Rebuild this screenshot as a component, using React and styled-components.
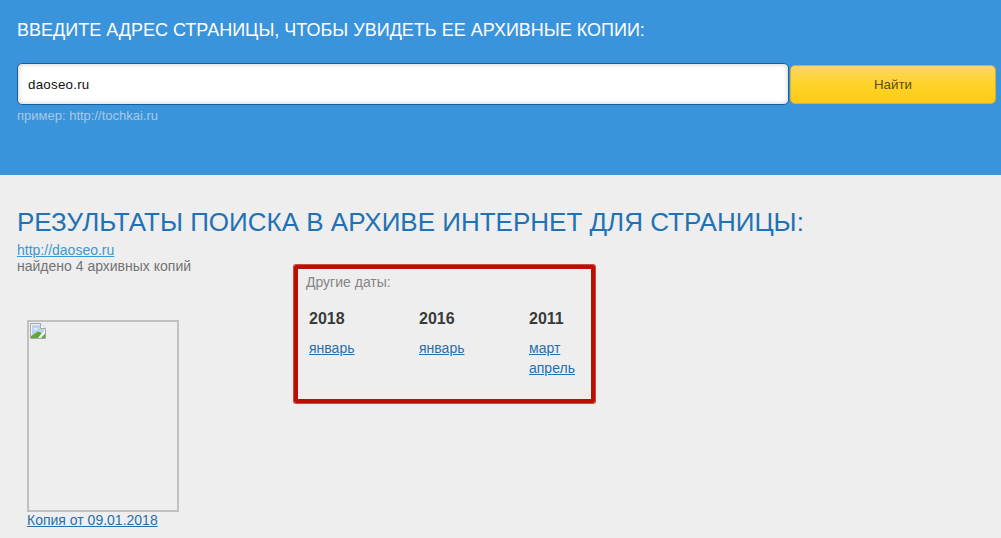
import React from "react";
import styled, { createGlobalStyle } from "styled-components";

const Global = createGlobalStyle`
  html, body { margin: 0; padding: 0; background: #eeeeee; }
  body { font-family: "Liberation Sans", Arial, sans-serif; overflow: hidden; }
`;
const Page = styled.div`
  width: 1001px;
  height: 538px;
  overflow: hidden;
  background: #eeeeee;
`;
const Header = styled.header`
  height: 175px;
  box-sizing: border-box;
  background: #3a94db;
  padding: 19px 5px 0 17px;
`;
const Prompt = styled.h2`
  margin: 0 0 22px;
  font-size: 18px;
  line-height: 22px;
  font-weight: 400;
  color: #ffffff;
`;
const SearchRow = styled.form`
  display: flex;
  align-items: flex-start;
  gap: 1px;
  margin: 0;
`;
const SearchInput = styled.input`
  width: 772px;
  height: 42px;
  box-sizing: border-box;
  padding: 0 10px;
  border: 1px solid #14609f;
  border-radius: 5px;
  background: #ffffff;
  box-shadow: inset 0 0 5px rgba(0, 0, 0, 0.22);
  font: 13.33px "Liberation Sans", Arial, sans-serif;
  letter-spacing: 0.25px;
  color: #111111;
  outline: none;
`;
const SearchButton = styled.button`
  width: 206px;
  height: 39px;
  margin-top: 2px;
  box-sizing: border-box;
  border: 1px solid #d2ae3c;
  border-radius: 5px;
  background: linear-gradient(#fbd768 0%, #fed32c 45%, #fecb14 100%);
  font: 13.33px "Liberation Sans", Arial, sans-serif;
  color: #5a4d1e;
  padding: 0;
`;
const Hint = styled.div`
  margin-top: 3px;
  font-size: 13px;
  line-height: 16px;
  color: #a9c9e4;
`;
const Results = styled.main`
  padding: 31px 0 0 17px;
`;
const ResultsTitle = styled.h1`
  margin: 0 0 4px;
  font-size: 26px;
  line-height: 32px;
  font-weight: 400;
  color: #2271b3;
`;
const Columns = styled.div`
  display: flex;
  align-items: flex-start;
`;
const Summary = styled.div`
  width: 277px;
  flex: none;
`;
const SiteLink = styled.a`
  display: block;
  width: max-content;
  font-size: 14px;
  line-height: 16px;
  color: #3c97cf;
  text-decoration: underline;
`;
const Found = styled.div`
  font-size: 14px;
  line-height: 16px;
  color: #737373;
`;
const Copy = styled.figure`
  margin: 46px 0 0 10px;
  width: 152px;
`;
const Thumb = styled.div`
  width: 152px;
  height: 192px;
  box-sizing: border-box;
  padding: 1px;
  border: 2px solid #c0c0c0;
`;
const CopyLink = styled.a`
  display: block;
  width: max-content;
  font-size: 14px;
  line-height: 16px;
  color: #2a6ea8;
  text-decoration: underline;
`;
const DatesBox = styled.aside`
  width: 301px;
  height: 138px;
  margin-top: 23px;
  box-sizing: border-box;
  padding: 4px 8px 0 8px;
  border: 4px solid #b90f00;
  border-radius: 2px;
  box-shadow: 0 0 0 1px #cf4a3e;
`;
const DatesLabel = styled.div`
  font-size: 14px;
  line-height: 18px;
  color: #858585;
`;
const Years = styled.div`
  display: grid;
  grid-template-columns: repeat(3, 110px);
  margin: 18px 0 0 3px;
`;
const Year = styled.div`
  font-size: 16px;
  font-weight: 700;
  line-height: 20px;
  color: #3a3a3a;
  margin-bottom: 9px;
`;
const Month = styled.a`
  display: block;
  width: max-content;
  font-size: 14px;
  line-height: 20px;
  color: #2a6ea8;
  text-decoration: underline;
`;

const BrokenImage = () => (
  <svg width="16" height="16" viewBox="0 0 16 16" style={{ display: "block" }}>
    <path d="M0.5 0.5H10.5L15.5 5.5V15.5H0.5Z" fill="#f2f4f8" stroke="#a6a6a6" />
    <path d="M10.5 0.5V5.5H15.5" fill="#ffffff" stroke="#a6a6a6" />
    <path d="M2 2H10V6H14V9L2 12Z" fill="#b9d3f2" />
    <path d="M3 6.5C5 4.5 7 5 8 6.5H3Z" fill="#ffffff" />
    <path d="M1 15V13L8 8.5L12 10L8 15Z" fill="#5fa83c" />
    <path d="M11 15L15 10.5V15Z" fill="#5fa83c" />
  </svg>
);

const years = [
  { year: 2018, months: ["январь"] },
  { year: 2016, months: ["январь"] },
  { year: 2011, months: ["март", "апрель"] },
];

export default function App() {
  return (
    <Page>
      <Global />
      <Header>
        <Prompt>ВВЕДИТЕ АДРЕС СТРАНИЦЫ, ЧТОБЫ УВИДЕТЬ ЕЕ АРХИВНЫЕ КОПИИ:</Prompt>
        <SearchRow onSubmit={(e) => e.preventDefault()}>
          <SearchInput defaultValue="daoseo.ru" />
          <SearchButton>Найти</SearchButton>
        </SearchRow>
        <Hint>пример: http://tochkai.ru</Hint>
      </Header>
      <Results>
        <ResultsTitle>РЕЗУЛЬТАТЫ ПОИСКА В АРХИВЕ ИНТЕРНЕТ ДЛЯ СТРАНИЦЫ:</ResultsTitle>
        <Columns>
          <Summary>
            <SiteLink href="#">http://daoseo.ru</SiteLink>
            <Found>найдено 4 архивных копий</Found>
            <Copy>
              <Thumb>
                <BrokenImage />
              </Thumb>
              <CopyLink href="#">Копия от 09.01.2018</CopyLink>
            </Copy>
          </Summary>
          <DatesBox>
            <DatesLabel>Другие даты:</DatesLabel>
            <Years>
              {years.map((y) => (
                <div key={y.year}>
                  <Year>{y.year}</Year>
                  {y.months.map((m) => (
                    <Month href="#" key={m}>{m}</Month>
                  ))}
                </div>
              ))}
            </Years>
          </DatesBox>
        </Columns>
      </Results>
    </Page>
  );
}
